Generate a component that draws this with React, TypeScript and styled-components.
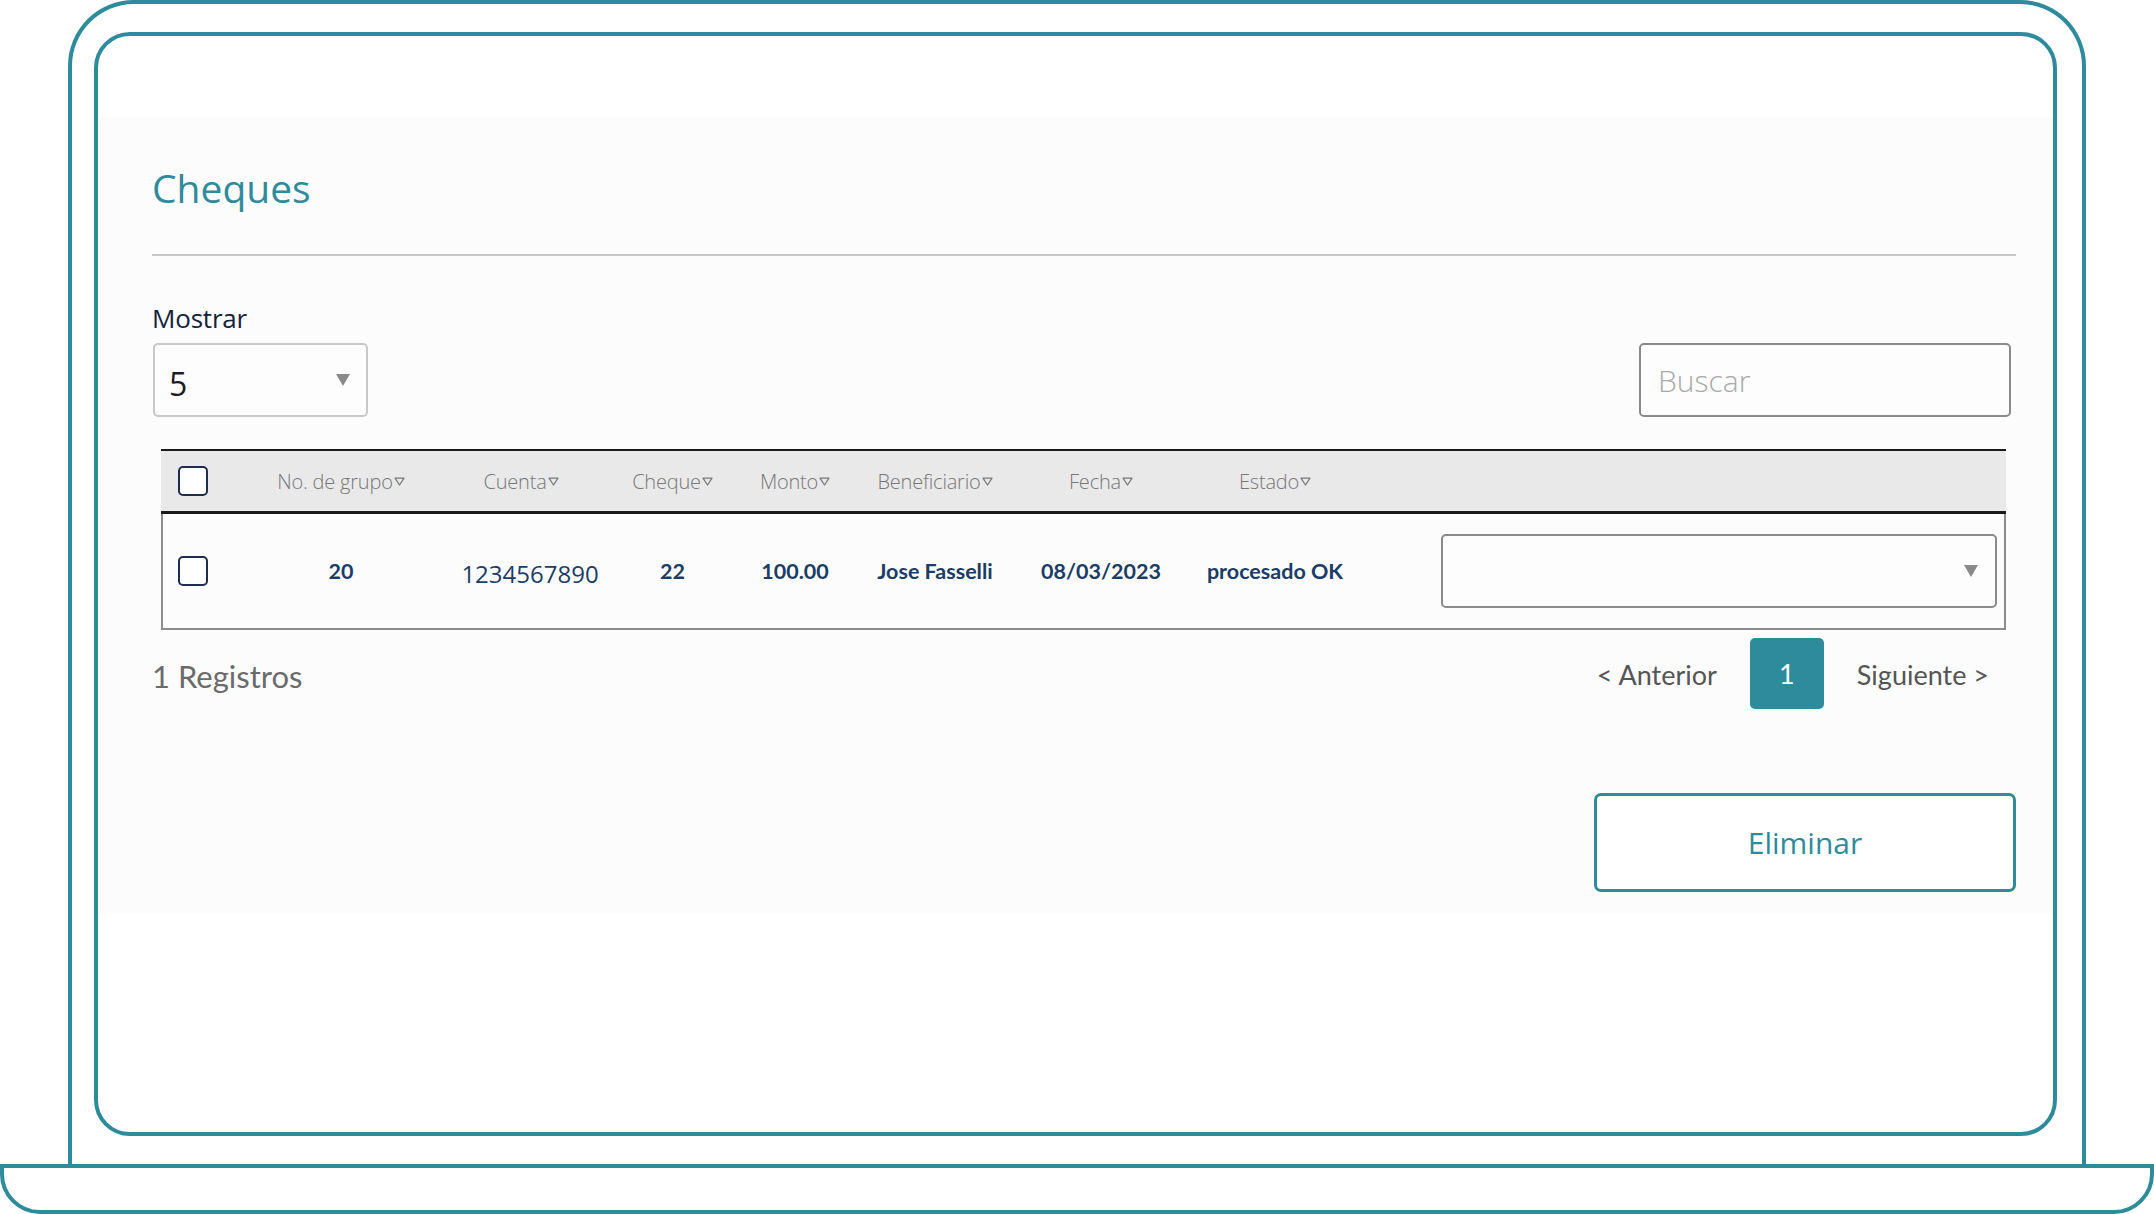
import React from "react";
import styled, { createGlobalStyle } from "styled-components";

const teal = "#2e8b9b";
const navy = "#1b3c64";

const GlobalStyle = createGlobalStyle`
  html, body {
    margin: 0;
    padding: 0;
    background: #ffffff;
  }
  body {
    font-family: "Open Sans", "Noto Sans", sans-serif;
  }
  * {
    box-sizing: border-box;
  }
`;

const Page = styled.div`
  width: 2154px;
  height: 1214px;
  display: flex;
  flex-direction: column;
  overflow: hidden;
`;

const Lid = styled.div`
  margin-left: 68px;
  width: 2018px;
  height: 1164px;
  border: 4px solid ${teal};
  border-bottom: none;
  border-radius: 66px 66px 0 0;
  padding: 28px 25px 28px 22px;
`;

const Screen = styled.div`
  width: 100%;
  height: 100%;
  border: 4px solid ${teal};
  border-radius: 36px;
  background: #ffffff;
  overflow: hidden;
`;

const Base = styled.div`
  width: 2154px;
  height: 50px;
  border: 4px solid ${teal};
  border-radius: 0 0 40px 40px;
`;

const Panel = styled.section`
  margin-top: 82px;
  background: #fcfcfc;
  padding: 46px 37px 21px 54px;
  display: flex;
  flex-direction: column;
`;

const Title = styled.h1`
  margin: 0;
  font-family: "Open Sans", sans-serif;
  font-weight: 500;
  font-size: 39px;
  line-height: 47px;
  color: ${teal};
`;

const Divider = styled.hr`
  margin: 43px 0 0;
  border: none;
  height: 2px;
  background: #c9c9c9;
`;

const Label = styled.label`
  margin-top: 46px;
  font-family: "Open Sans", sans-serif;
  font-weight: 500;
  font-size: 26px;
  line-height: 32px;
  letter-spacing: -0.2px;
  color: #15213a;
`;

const Controls = styled.div`
  margin-top: 9px;
  display: flex;
  justify-content: space-between;
  align-items: center;
  padding: 0 5px 0 1px;
`;

const SelectBox = styled.div<{ $width: number; $border: string }>`
  width: ${(p) => p.$width}px;
  height: 74px;
  border: 2px solid ${(p) => p.$border};
  border-radius: 5px;
  background: #fdfdfd;
  display: flex;
  align-items: center;
  justify-content: space-between;
  padding: 0 16px 0 14px;
`;

const SelectValue = styled.span`
  font-family: "Open Sans", sans-serif;
  font-size: 32px;
  color: #1d1d1d;
  padding-top: 6px;
`;

const SearchBox = styled.div`
  width: 372px;
  height: 74px;
  border: 2px solid #8a8a8a;
  border-radius: 5px;
  background: #fdfdfd;
  display: flex;
  align-items: center;
  padding: 0 17px;
  font-family: "Open Sans", sans-serif;
  font-weight: 300;
  font-size: 30px;
  color: #a9a9a9;
`;

const Table = styled.div`
  margin: 32px 10px 0 9px;
  border: 2px solid #8c8c8c;
  border-top: none;
`;

const cols = "89px 178px 182px 121px 124px 156px 176px 172px 1fr";

const HeaderRow = styled.div`
  display: grid;
  grid-template-columns: ${cols};
  align-items: center;
  height: 65px;
  margin: 0 -2px;
  padding: 0 2px;
  background: #e9e9e9;
  border-top: 2px solid #1a1a1a;
  border-bottom: 3px solid #1a1a1a;
`;

const BodyRow = styled.div`
  display: grid;
  grid-template-columns: ${cols};
  align-items: center;
  height: 114px;
`;

const Check = styled.span`
  margin-left: 15px;
  width: 30px;
  height: 30px;
  border: 2px solid #1e2d4f;
  border-radius: 5px;
  background: #ffffff;
`;

const HeadCell = styled.div`
  display: flex;
  justify-content: center;
  align-items: center;
  gap: 1px;
  font-family: "Open Sans", sans-serif;
  font-weight: 300;
  font-size: 20px;
  letter-spacing: -0.2px;
  color: #777777;
`;

const Cell = styled.div<{ $plain?: boolean; $shift?: number }>`
  text-align: center;
  font-family: ${(p) => (p.$plain ? '"Open Sans", sans-serif' : '"Lato", sans-serif')};
  font-weight: ${(p) => (p.$plain ? 400 : 700)};
  font-size: ${(p) => (p.$plain ? "24px" : "21.5px")};
  padding-top: ${(p) => (p.$plain ? "4px" : "0")};
  padding-left: ${(p) => (p.$shift ? p.$shift * 2 : 0)}px;
  color: ${navy};
  white-space: nowrap;
`;

const RowSelect = styled(SelectBox)`
  justify-self: end;
  margin-right: 7px;
  justify-content: flex-end;
  padding-right: 17px;
`;

const Footer = styled.div`
  margin-top: 8px;
  display: flex;
  justify-content: space-between;
  align-items: center;
`;

const Count = styled.span`
  padding-top: 5px;
  font-family: "Lato", sans-serif;
  font-size: 31px;
  color: #6b6b6b;
`;

const Pager = styled.nav`
  display: flex;
  align-items: center;
  gap: 33px;
  margin-right: 27px;
`;

const PageLink = styled.span`
  padding-top: 2px;
  font-family: "Lato", sans-serif;
  font-size: 27px;
  color: #555555;
`;

const PageNumber = styled.span`
  width: 74px;
  height: 71px;
  border-radius: 5px;
  background: ${teal};
  color: #ffffff;
  display: flex;
  align-items: center;
  justify-content: center;
  font-family: "Lato", sans-serif;
  font-size: 27px;
`;

const Actions = styled.div`
  margin-top: 84px;
  display: flex;
  justify-content: flex-end;
`;

const DeleteButton = styled.button`
  width: 422px;
  height: 99px;
  border: 3px solid ${teal};
  border-radius: 7px;
  background: #ffffff;
  color: ${teal};
  font-family: "Open Sans", sans-serif;
  font-weight: 500;
  font-size: 30px;
`;

const SortIcon = () => (
  <svg width="11" height="9" viewBox="0 0 11 9">
    <path d="M1 1.2h9L5.5 8z" fill="none" stroke="#7a7a7a" strokeWidth="1.3" strokeLinejoin="round" />
  </svg>
);

const Caret = () => (
  <svg width="14" height="12" viewBox="0 0 14 12">
    <path d="M0 0h14L7 12z" fill="#8a8a8a" />
  </svg>
);

const headers = ["No. de grupo", "Cuenta", "Cheque", "Monto", "Beneficiario", "Fecha", "Estado"];

export default function App() {
  return (
    <Page>
      <GlobalStyle />
      <Lid>
        <Screen>
          <Panel>
            <Title>Cheques</Title>
            <Divider />
            <Label>Mostrar</Label>
            <Controls>
              <SelectBox $width={215} $border="#c8c8c8">
                <SelectValue>5</SelectValue>
                <Caret />
              </SelectBox>
              <SearchBox>Buscar</SearchBox>
            </Controls>

            <Table>
              <HeaderRow>
                <Check />
                {headers.map((h) => (
                  <HeadCell key={h}>
                    {h}
                    <SortIcon />
                  </HeadCell>
                ))}
                <div />
              </HeaderRow>
              <BodyRow>
                <Check />
                <Cell>20</Cell>
                <Cell $plain $shift={9}>1234567890</Cell>
                <Cell>22</Cell>
                <Cell>100.00</Cell>
                <Cell>Jose Fasselli</Cell>
                <Cell>08/03/2023</Cell>
                <Cell>procesado OK</Cell>
                <RowSelect $width={556} $border="#8a8a8a">
                  <Caret />
                </RowSelect>
              </BodyRow>
            </Table>

            <Footer>
              <Count>1 Registros</Count>
              <Pager>
                <PageLink>&lt; Anterior</PageLink>
                <PageNumber>1</PageNumber>
                <PageLink>Siguiente &gt;</PageLink>
              </Pager>
            </Footer>

            <Actions>
              <DeleteButton>Eliminar</DeleteButton>
            </Actions>
          </Panel>
        </Screen>
      </Lid>
      <Base />
    </Page>
  );
}
